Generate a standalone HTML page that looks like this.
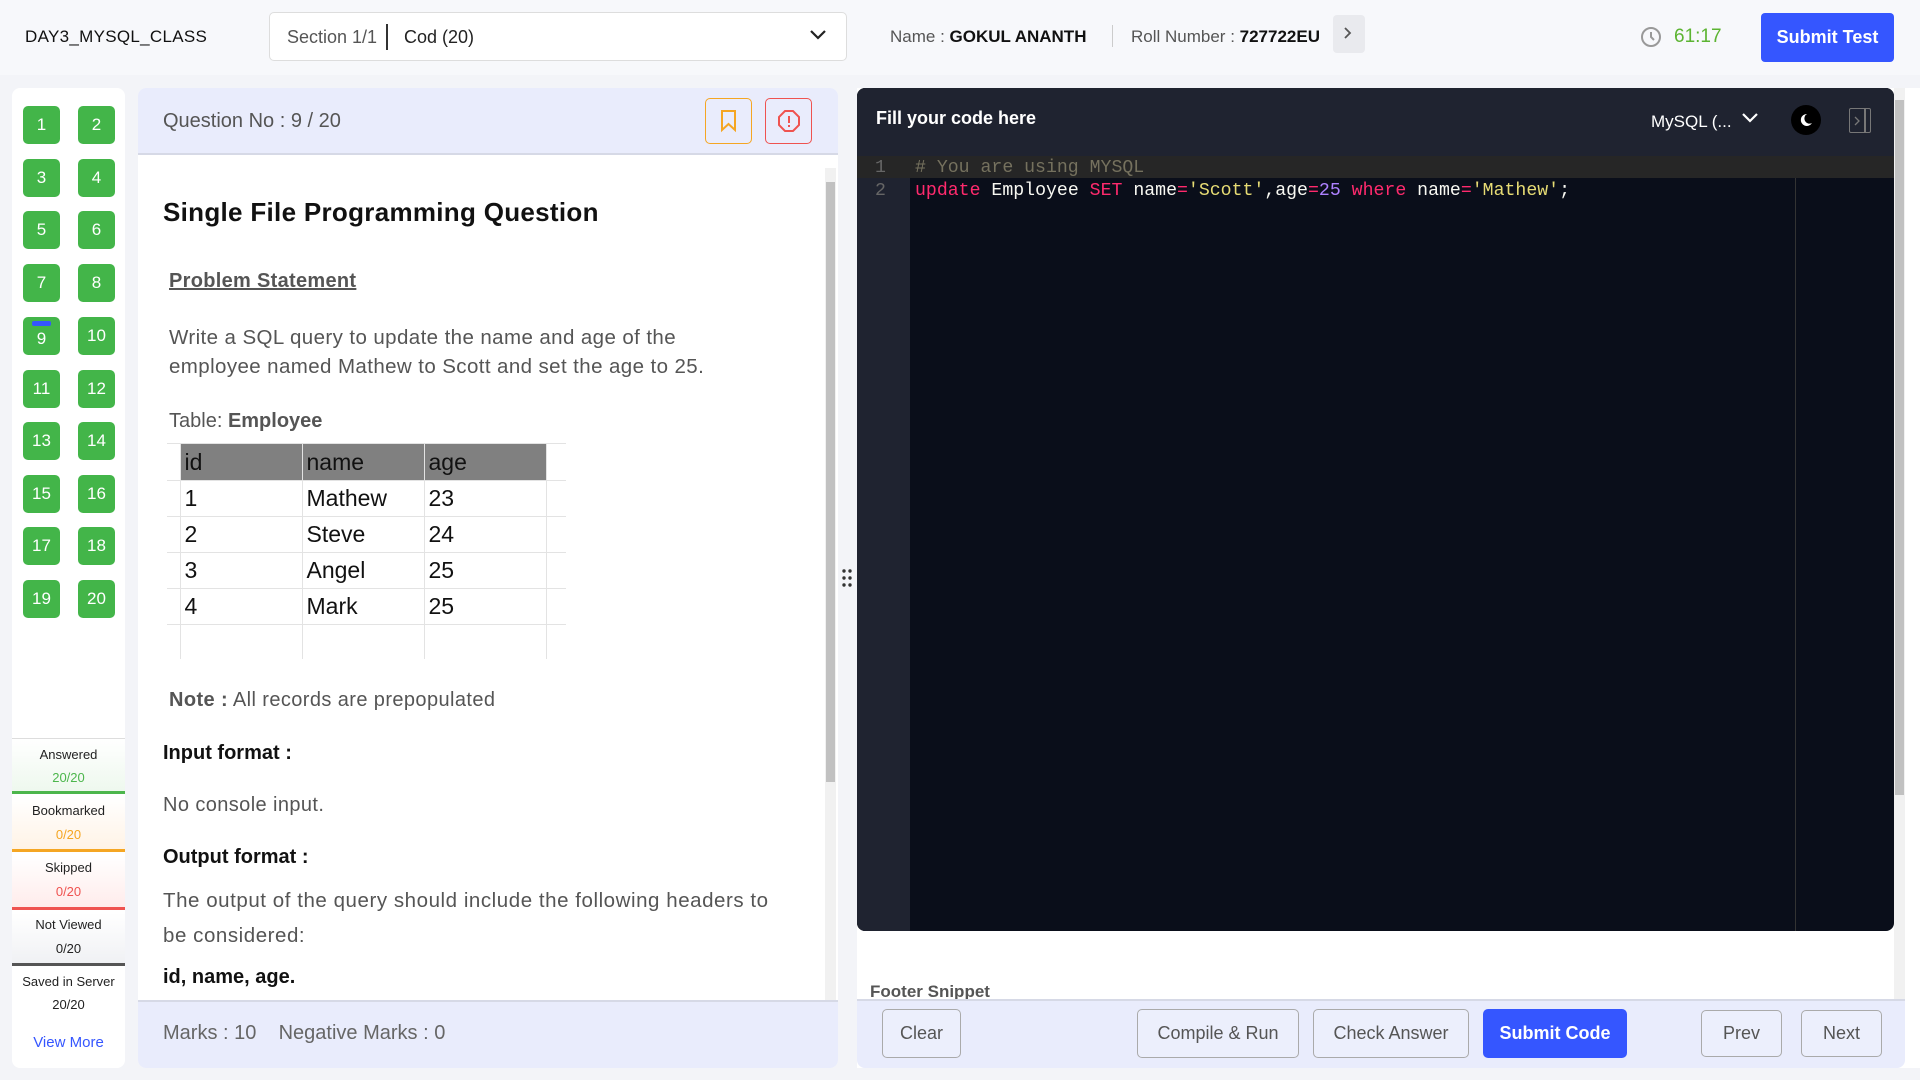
<!DOCTYPE html>
<html><head><meta charset="utf-8"><style>
*{box-sizing:border-box;margin:0;padding:0}
body{width:1920px;height:1080px;background:#f3f4f8;font-family:"Liberation Sans",sans-serif;position:relative;overflow:hidden;color:#222}
.a{position:absolute}
.hdr{left:0;top:0;width:1920px;height:75px;background:#f7f8fb}
.nb{position:absolute;width:37px;height:38px;background:#43b549;border-radius:5px;color:#fff;font-size:17px;text-align:center;line-height:38px}
.st{position:absolute;left:12px;width:113px;text-align:center;font-size:13px}
.btn{position:absolute;top:1009px;height:49px;border:1px solid #aaa;border-radius:5px;background:#eceffc;color:#555;font-size:18px;text-align:center;line-height:47px}
.mono{font-family:"Liberation Mono",monospace;font-size:18.2px;white-space:pre}
td{border:1px solid #e3e3e3;padding-left:4px}
.p{letter-spacing:0.4px}
</style></head><body>
<div class="a hdr"></div>
<div class="a" style="left:25px;top:27px;font-size:17px;color:#111;letter-spacing:0.3px">DAY3_MYSQL_CLASS</div>
<div class="a" style="left:269px;top:12px;width:578px;height:49px;background:#fff;border:1px solid #ddd;border-radius:5px"></div>
<div class="a" style="left:287px;top:27px;font-size:18px;color:#555">Section 1/1</div>
<div class="a" style="left:386px;top:24px;width:2px;height:26px;background:#333"></div>
<div class="a" style="left:404px;top:27px;font-size:18px;color:#222">Cod (20)</div>
<svg class="a" style="left:809px;top:28px" width="18" height="14"><path d="M2 3l7 7 7-7" stroke="#222" stroke-width="2.2" fill="none"/></svg>
<div class="a" style="left:890px;top:27px;font-size:17px;color:#555">Name : <b style="color:#111;font-weight:600">GOKUL ANANTH</b></div>
<div class="a" style="left:1112px;top:25px;width:1px;height:22px;background:#ccc"></div>
<div class="a" style="left:1131px;top:27px;font-size:17px;color:#555">Roll Number : <b style="color:#111;font-weight:600">727722EU</b></div>
<div class="a" style="left:1333px;top:15px;width:32px;height:38px;background:#e9eaee;border-radius:4px"></div>
<svg class="a" style="left:1342px;top:26px" width="12" height="14"><path d="M3 2l5 5-5 5" stroke="#555" stroke-width="1.8" fill="none"/></svg>
<svg class="a" style="left:1640px;top:26px" width="22" height="22"><circle cx="11" cy="11" r="9" stroke="#999" stroke-width="2" fill="none"/><path d="M11 6v5l3 3" stroke="#999" stroke-width="2" fill="none"/></svg>
<div class="a" style="left:1674px;top:26px;font-size:19px;color:#5cb432">61:17</div>
<div class="a" style="left:1761px;top:13px;width:133px;height:49px;background:#3556ff;border-radius:4px;color:#fff;font-size:18px;font-weight:bold;text-align:center;line-height:49px">Submit Test</div>

<div class="a" style="left:12px;top:88px;width:113px;height:980px;background:#fff;border-radius:8px"></div>
<div class="nb" style="left:23px;top:106px">1</div><div class="nb" style="left:78px;top:106px">2</div>
<div class="nb" style="left:23px;top:159px">3</div><div class="nb" style="left:78px;top:159px">4</div>
<div class="nb" style="left:23px;top:211px">5</div><div class="nb" style="left:78px;top:211px">6</div>
<div class="nb" style="left:23px;top:264px">7</div><div class="nb" style="left:78px;top:264px">8</div>
<div class="nb" style="left:23px;top:317px;line-height:44px">9<div class="a" style="left:9px;top:4px;width:19px;height:5px;background:#3556ff;border-radius:2px"></div></div><div class="nb" style="left:78px;top:317px">10</div>
<div class="nb" style="left:23px;top:370px">11</div><div class="nb" style="left:78px;top:370px">12</div>
<div class="nb" style="left:23px;top:422px">13</div><div class="nb" style="left:78px;top:422px">14</div>
<div class="nb" style="left:23px;top:475px">15</div><div class="nb" style="left:78px;top:475px">16</div>
<div class="nb" style="left:23px;top:527px">17</div><div class="nb" style="left:78px;top:527px">18</div>
<div class="nb" style="left:23px;top:580px">19</div><div class="nb" style="left:78px;top:580px">20</div>
<div class="a" style="left:12px;top:738px;width:113px;height:1px;background:#ddd"></div>
<div class="a" style="left:12px;top:739px;width:113px;height:55px;background:linear-gradient(#fff,#eef8ee);border-bottom:3px solid #4cb64c"></div>
<div class="a" style="left:12px;top:797px;width:113px;height:55px;background:linear-gradient(#fff,#fff3e6);border-bottom:3px solid #f5a623"></div>
<div class="a" style="left:12px;top:855px;width:113px;height:55px;background:linear-gradient(#fff,#ffeceb);border-bottom:3px solid #ef5350"></div>
<div class="a" style="left:12px;top:913px;width:113px;height:53px;background:linear-gradient(#fff,#f0f1f4);border-bottom:3px solid #555"></div>
<div class="st" style="top:747px">Answered</div><div class="st" style="top:770px;color:#4cb64c">20/20</div>
<div class="st" style="top:803px">Bookmarked</div><div class="st" style="top:827px;color:#f5a623">0/20</div>
<div class="st" style="top:860px">Skipped</div><div class="st" style="top:884px;color:#ef5350">0/20</div>
<div class="st" style="top:917px">Not Viewed</div><div class="st" style="top:941px">0/20</div>
<div class="st" style="top:974px">Saved in Server</div><div class="st" style="top:997px">20/20</div>
<div class="st" style="top:1034px;color:#3556ff;font-size:15px">View More</div>

<div class="a" style="left:138px;top:88px;width:700px;height:980px;background:#fff;border-radius:8px;overflow:hidden">
 <div class="a" style="left:0;top:0;width:700px;height:67px;background:#e9ecfc;border-bottom:2px solid #d6d9e6"></div>
 <div class="a" style="left:25px;top:22px;font-size:20px;color:#555" >Question No : 9 / 20</div>
 <div class="a" style="left:567px;top:10px;width:47px;height:46px;border:1.5px solid #f5a623;border-radius:5px"></div>
 <svg class="a" style="left:581px;top:21px" width="20" height="24"><path d="M3 2h13v19l-6.5-6-6.5 6z" stroke="#f5a623" stroke-width="2" fill="none"/></svg>
 <div class="a" style="left:627px;top:10px;width:47px;height:46px;border:1.5px solid #ef5350;border-radius:5px"></div>
 <svg class="a" style="left:639px;top:21px" width="24" height="24"><path d="M8 2h8l6 6v8l-6 6H8l-6-6V8z" stroke="#ef5350" stroke-width="2" fill="none"/><path d="M12 7v7M12 16v2" stroke="#ef5350" stroke-width="2"/></svg>
 <div class="a" style="left:687px;top:80px;width:11px;height:835px;background:#f1f1f1"></div>
 <div class="a" style="left:688px;top:94px;width:9px;height:600px;background:#c1c1c1"></div>
 <div class="a" style="left:25px;top:109px;font-size:26px;font-weight:bold;color:#111;letter-spacing:0.3px">Single File Programming Question</div>
 <div class="a" style="left:31px;top:182px;font-size:20px;font-weight:bold;color:#555;text-decoration:underline;letter-spacing:0.3px">Problem Statement</div>
 <div class="a p" style="left:31px;top:235px;font-size:20.5px;color:#555;line-height:29px">Write a SQL query to update the name and age of the<br>employee named Mathew to Scott and set the age to 25.</div>
 <div class="a" style="left:31px;top:322px;font-size:20px;color:#555">Table: <b>Employee</b></div>
 <table class="a" style="left:29px;top:355px;border-collapse:collapse;font-size:23px;color:#111">
  <tr style="height:37px"><td style="width:13px;border-left:0;padding:0"></td><td style="width:122px;background:#808080">id</td><td style="width:122px;background:#808080">name</td><td style="width:122px;background:#808080">age</td><td style="width:20px;border-right:0;padding:0"></td></tr>
  <tr style="height:36px"><td style="border-left:0"></td><td>1</td><td>Mathew</td><td>23</td><td style="border-right:0"></td></tr>
  <tr style="height:36px"><td style="border-left:0"></td><td>2</td><td>Steve</td><td>24</td><td style="border-right:0"></td></tr>
  <tr style="height:36px"><td style="border-left:0"></td><td>3</td><td>Angel</td><td>25</td><td style="border-right:0"></td></tr>
  <tr style="height:36px"><td style="border-left:0"></td><td>4</td><td>Mark</td><td>25</td><td style="border-right:0"></td></tr>
  <tr style="height:34px"><td style="border-left:0;border-bottom:0"></td><td style="border-bottom:0"></td><td style="border-bottom:0"></td><td style="border-bottom:0"></td><td style="border:0"></td></tr>
 </table>
 <div class="a p" style="left:31px;top:601px;font-size:20px;color:#555"><b>Note :</b> All records are prepopulated</div>
 <div class="a" style="left:25px;top:654px;font-size:20px;font-weight:bold;color:#111">Input format :</div>
 <div class="a p" style="left:25px;top:706px;font-size:20px;color:#555">No console input.</div>
 <div class="a" style="left:25px;top:758px;font-size:20px;font-weight:bold;color:#111">Output format :</div>
 <div class="a" style="left:25px;top:795px;font-size:20.5px;color:#555;line-height:35px;letter-spacing:0.55px">The output of the query should include the following headers to<br>be considered:</div>
 <div class="a" style="left:25px;top:878px;font-size:20px;font-weight:bold;color:#111">id, name, age.</div>
 <div class="a" style="left:0;top:912px;width:700px;height:68px;background:#e9ecfc;border-top:2px solid #d6d9e6"></div>
 <div class="a" style="left:25px;top:934px;font-size:20px;color:#666">Marks : 10 &nbsp;&nbsp;&nbsp;Negative Marks : 0</div>
</div>
<svg class="a" style="left:841px;top:568px" width="12" height="20"><g fill="#333"><circle cx="3" cy="3" r="1.7"/><circle cx="9" cy="3" r="1.7"/><circle cx="3" cy="10" r="1.7"/><circle cx="9" cy="10" r="1.7"/><circle cx="3" cy="17" r="1.7"/><circle cx="9" cy="17" r="1.7"/></g></svg>

<div class="a" style="left:857px;top:88px;width:1063px;height:980px;background:#fff"></div>
<div class="a" style="left:857px;top:88px;width:1037px;height:843px;background:#0a0e1a;border-radius:8px;overflow:hidden">
 <div class="a" style="left:0;top:0;width:1037px;height:68px;background:#1f2330"></div>
 <div class="a" style="left:0;top:68px;width:53px;height:775px;background:#1f2330"></div>
 <div class="a" style="left:0;top:68px;width:1037px;height:22px;background:#262626"></div>
 <div class="a" style="left:938px;top:90px;width:1px;height:753px;background:#333"></div>
 <div class="a" style="left:19px;top:20px;font-size:18px;color:#fff;font-weight:bold">Fill your code here</div>
 <div class="a" style="left:794px;top:24px;font-size:17px;color:#fff">MySQL (...</div>
 <svg class="a" style="left:884px;top:24px" width="18" height="14"><path d="M2 2l7 7 7-7" stroke="#fff" stroke-width="2.2" fill="none"/></svg>
 <div class="a" style="left:934px;top:17px;width:30px;height:30px;background:#000;border-radius:50%"></div>
 <svg class="a" style="left:941px;top:24px" width="16" height="16"><path d="M9 2a6 6 0 1 0 5 9a5 5 0 0 1-5-9z" fill="#fff"/></svg>
 <div class="a" style="left:992px;top:20px;width:22px;height:25px;border:1.5px solid #777;border-radius:2px"></div>
 <div class="a" style="left:1007px;top:20px;width:1.5px;height:25px;background:#777"></div>
 <svg class="a" style="left:996px;top:27px" width="8" height="12"><path d="M2 2l4 4-4 4" stroke="#777" stroke-width="1.3" fill="none"/></svg>
 <div class="a mono" style="left:18px;top:69px;line-height:23px;color:#666">1
2</div>
 <div class="a mono" style="left:58px;top:69px;line-height:23px;color:#f8f8f2"><span style="color:#75715e"># You are using MYSQL</span>
<span style="color:#ff2a6d">update</span> Employee <span style="color:#ff2a6d">SET</span> name<span style="color:#ff2a6d">=</span><span style="color:#e6db74">'Scott'</span>,age<span style="color:#ff2a6d">=</span><span style="color:#ae81ff">25</span> <span style="color:#ff2a6d">where</span> name<span style="color:#ff2a6d">=</span><span style="color:#e6db74">'Mathew'</span>;</div>
</div>
<div class="a" style="left:1894px;top:88px;width:11px;height:912px;background:#f1f1f1"></div>
<div class="a" style="left:1895px;top:100px;width:9px;height:695px;background:#c1c1c1"></div>
<div class="a" style="left:870px;top:982px;font-size:17px;font-weight:bold;color:#555">Footer Snippet</div>
<div class="a" style="left:857px;top:999px;width:1048px;height:69px;background:#e9ecfc;border-top:2px solid #d6d9e6;border-radius:0 0 8px 8px"></div>
<div class="btn" style="left:882px;width:79px">Clear</div>
<div class="btn" style="left:1137px;width:162px">Compile &amp; Run</div>
<div class="btn" style="left:1313px;width:156px">Check Answer</div>
<div class="btn" style="left:1483px;width:144px;background:#3556ff;border-color:#3556ff;color:#fff;font-weight:bold">Submit Code</div>
<div class="btn" style="left:1701px;width:81px;top:1010px;height:47px;line-height:45px">Prev</div>
<div class="btn" style="left:1801px;width:81px;top:1010px;height:47px;line-height:45px">Next</div>
</body></html>
